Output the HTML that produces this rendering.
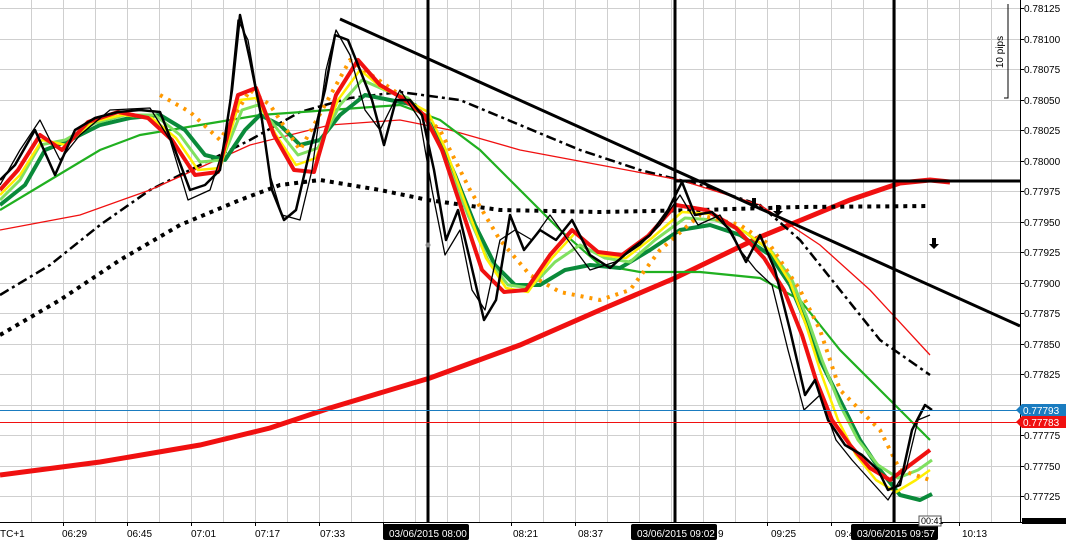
<!DOCTYPE html>
<html><head><meta charset="utf-8"><style>
html,body{margin:0;padding:0;background:#fff;width:1066px;height:540px;overflow:hidden}
svg{display:block;font-family:"Liberation Sans",sans-serif}
</style></head><body>
<svg width="1066" height="540" viewBox="0 0 1066 540" xmlns="http://www.w3.org/2000/svg">
<rect width="1066" height="540" fill="#fff"/>
<g stroke="#cfcfcf" stroke-width="1">
<path d="M0 8.5H1020M0 39.5H1020M0 69.5H1020M0 100.5H1020M0 130.5H1020M0 161.5H1020M0 191.5H1020M0 222.5H1020M0 252.5H1020M0 283.5H1020M0 313.5H1020M0 344.5H1020M0 374.5H1020M0 405.5H1020M0 435.5H1020M0 466.5H1020M0 496.5H1020"/>
<path d="M31.5 0V522M63.5 0V522M95.5 0V522M127.5 0V522M159.5 0V522M191.5 0V522M223.5 0V522M255.5 0V522M287.5 0V522M319.5 0V522M351.5 0V522M383.5 0V522M415.5 0V522M447.5 0V522M479.5 0V522M511.5 0V522M543.5 0V522M575.5 0V522M607.5 0V522M639.5 0V522M671.5 0V522M703.5 0V522M735.5 0V522M767.5 0V522M799.5 0V522M831.5 0V522M863.5 0V522M895.5 0V522M927.5 0V522M959.5 0V522M991.5 0V522"/>
</g>
<!-- 10 pips marker -->
<path d="M1008 4V98H1004" stroke="#000" fill="none"/>
<text x="1003" y="52" font-size="10" transform="rotate(-90 1003 52)" text-anchor="middle">10 pips</text>
<!-- long red MA -->
<polyline fill="none" stroke="#f01010" stroke-width="5" points="0,475 100,462 200,445 270,428 330,408 430,378 520,345 600,310 675,278 760,237 850,200 900,183 930,180 950,182"/>
<!-- dotted -->
<polyline fill="none" stroke="#000" stroke-width="4" stroke-dasharray="4,5" points="0,335 60,300 120,260 180,225 240,200 280,185 320,180 380,190 428,200 500,210 600,212 700,210 800,207 930,206"/>
<!-- dash dot -->
<polyline fill="none" stroke="#000" stroke-width="2.5" stroke-dasharray="10,4,3,4" points="0,295 50,265 100,225 150,190 200,165 250,140 300,112 350,98 400,92 460,100 520,125 580,150 640,170 700,185 760,205 800,240 840,290 880,340 930,375"/>
<!-- thin red -->
<polyline fill="none" stroke="#f01010" stroke-width="1.3" points="0,230 80,215 150,190 250,145 330,125 400,120 450,130 520,150 600,165 680,180 760,205 820,245 870,290 930,355"/>
<!-- green medium -->
<polyline fill="none" stroke="#20b020" stroke-width="2.2" points="0,210 50,180 100,150 140,135 200,125 260,115 330,110 400,105 440,120 480,150 520,190 560,230 600,265 640,272 700,272 760,278 800,300 840,350 880,390 930,440"/>
<!-- spaghetti -->
<g fill="none" stroke-linejoin="round">
<polyline stroke="#0a8a3a" stroke-width="4" points="0,205 25,185 45,150 70,140 100,125 130,118 160,115 185,130 205,155 225,160 245,130 260,115 280,125 300,145 320,140 340,115 365,95 390,100 415,105 435,130 455,175 475,225 495,265 515,285 540,285 565,270 590,265 620,268 650,250 680,230 710,225 740,235 770,255 790,285 805,320 820,360 840,400 860,440 880,470 900,495 920,500 932,494"/>
<polyline stroke="#80e060" stroke-width="3" points="0,200 20,180 40,145 65,140 95,123 125,115 155,115 180,135 200,162 222,160 242,110 258,105 278,130 298,155 318,148 340,105 362,80 385,90 408,98 428,120 448,165 468,215 488,260 508,285 530,288 555,262 580,245 605,258 630,262 655,240 685,218 715,220 745,232 772,252 792,280 808,320 822,360 840,405 858,440 878,465 898,478 918,470 932,460"/>
<polyline stroke="#ffee00" stroke-width="2.5" points="0,195 20,175 42,140 66,145 92,122 122,115 152,118 176,138 198,170 220,168 240,100 256,98 276,135 296,165 316,158 338,100 360,70 382,88 406,100 428,112 446,150 466,205 486,258 506,288 528,292 552,258 576,232 600,255 626,258 652,238 682,212 712,214 742,230 770,250 790,282 806,325 820,370 838,420 856,455 876,480 896,492 916,480 930,470"/>
<polyline stroke="#ff9900" stroke-width="4" stroke-dasharray="3,6" points="160,95 190,112 220,140 250,90 270,105 300,150 350,60 400,95 440,130 470,190 500,240 530,275 560,292 600,300 630,290 660,250 700,215 740,225 770,245 800,290 820,330 840,390 860,410 880,430 900,470 930,480"/>
<polyline stroke="#f01010" stroke-width="4" points="0,190 18,170 40,135 62,150 88,122 118,112 148,118 172,140 195,175 218,172 238,95 256,88 274,135 294,170 314,172 336,95 358,60 380,85 402,98 424,115 442,150 462,210 482,270 504,292 526,290 550,255 572,230 598,252 622,255 648,236 676,205 706,210 736,228 764,258 784,290 802,335 816,380 832,420 850,445 870,468 890,480 910,465 930,450"/>
<polyline stroke="#000" stroke-width="2.5" points="0,180 15,165 35,130 55,175 75,130 95,118 118,112 140,110 160,112 175,150 190,190 205,185 220,170 232,90 240,15 250,60 262,120 272,190 284,220 296,210 310,150 325,90 335,35 348,40 360,70 372,100 384,145 396,100 410,100 422,115 434,170 446,240 458,210 470,260 484,320 496,300 510,215 524,250 540,230 556,240 572,220 590,255 610,268 630,250 650,235 668,210 682,182 695,215 712,212 730,230 746,262 760,235 775,270 790,330 805,395 815,380 828,420 845,445 862,455 878,470 888,490 900,485 912,430 925,405 932,410"/>
<polyline stroke="#000" stroke-width="1.3" points="0,185 20,150 40,120 60,160 80,135 110,110 150,108 170,140 188,200 210,190 226,140 238,20 248,40 260,110 270,175 282,215 300,220 312,170 326,70 336,30 350,55 365,110 380,130 400,90 420,120 432,190 445,255 460,230 472,290 485,310 500,240 515,230 532,240 550,215 568,240 590,270 615,262 640,245 660,225 680,195 698,225 720,215 740,250 756,270 772,285 788,350 804,410 820,395 836,440 852,460 870,480 888,500 906,470 918,420 930,415"/>
</g>
<!-- vertical thick lines -->
<path d="M428 0V522M675 0V522M894 0V522" stroke="#000" stroke-width="3"/>
<!-- trend line -->
<path d="M340 19L1020 326" stroke="#000" stroke-width="3"/>
<path d="M676 181H1020" stroke="#000" stroke-width="3"/>
<!-- arrows -->
<g fill="#000"><path d="M752 198h4v6h3l-5 5-5-5h3z"/><path d="M776 205h4v6h3l-5 5-5-5h3z"/><path d="M932 238h4v6h3l-5 5-5-5h3z"/></g>
<circle cx="428" cy="245" r="2.5" fill="#888"/>
<!-- price lines -->
<path d="M0 410.5H1020" stroke="#1a7cc0" stroke-width="1"/>
<path d="M0 422.5H1020" stroke="#f01010" stroke-width="1"/>
<!-- axes -->
<rect x="1021" y="0" width="45" height="540" fill="#fff"/>
<path d="M1020.5 0V522M0 522.5H1066" stroke="#000" stroke-width="1"/>
<g font-size="10" fill="#000">
<g stroke="#000"><path d="M1020 8.5h4M1020 39.5h4M1020 69.5h4M1020 100.5h4M1020 130.5h4M1020 161.5h4M1020 191.5h4M1020 222.5h4M1020 252.5h4M1020 283.5h4M1020 313.5h4M1020 344.5h4M1020 374.5h4M1020 405.5h4M1020 435.5h4M1020 466.5h4M1020 496.5h4"/></g>
<text x="1024" y="12">0.78125</text><text x="1024" y="43">0.78100</text><text x="1024" y="73">0.78075</text><text x="1024" y="104">0.78050</text><text x="1024" y="134">0.78025</text><text x="1024" y="165">0.78000</text><text x="1024" y="195">0.77975</text><text x="1024" y="226">0.77950</text><text x="1024" y="256">0.77925</text><text x="1024" y="287">0.77900</text><text x="1024" y="317">0.77875</text><text x="1024" y="348">0.77850</text><text x="1024" y="378">0.77825</text><text x="1024" y="439">0.77775</text><text x="1024" y="470">0.77750</text><text x="1024" y="500">0.77725</text>
</g>
<path d="M1016 410L1022 404H1066V416H1022Z" fill="#1a7cc0"/>
<text x="1023" y="414" font-size="10" fill="#fff">0.77793</text>
<path d="M1016 422L1022 416H1066V428H1022Z" fill="#f01010"/>
<text x="1023" y="426" font-size="10" fill="#fff">0.77783</text>
<rect x="1022" y="518" width="44" height="6" fill="#000"/>
<!-- bottom labels -->
<g font-size="10" fill="#000">
<text x="0" y="537">TC+1</text><text x="62" y="537">06:29</text><text x="127" y="537">06:45</text><text x="191" y="537">07:01</text><text x="255" y="537">07:17</text><text x="320" y="537">07:33</text><text x="513" y="537">08:21</text><text x="578" y="537">08:37</text><text x="718" y="537">9</text><text x="771" y="537">09:25</text><text x="835" y="537">09:4</text><text x="962" y="537">10:13</text>
</g>
<g stroke="#000"><path d="M63.5 522v4M127.5 522v4M191.5 522v4M255.5 522v4M319.5 522v4M383.5 522v4M511.5 522v4M575.5 522v4M767.5 522v4M831.5 522v4M959.5 522v4"/></g>
<rect x="383" y="524" width="86" height="16" rx="2" fill="#000"/><text x="389" y="537" font-size="10" fill="#fff">03/06/2015 08:00</text>
<rect x="631" y="524" width="86" height="16" rx="2" fill="#000"/><text x="637" y="537" font-size="10" fill="#fff">03/06/2015 09:02</text>
<rect x="851" y="524" width="87" height="16" rx="2" fill="#000"/><text x="857" y="537" font-size="10" fill="#fff">03/06/2015 09:57</text>
<path d="M919 516h22v10h-22z" fill="#fff" stroke="#555"/><text x="921" y="524" font-size="9">00:41</text>
</svg>
</body></html>
